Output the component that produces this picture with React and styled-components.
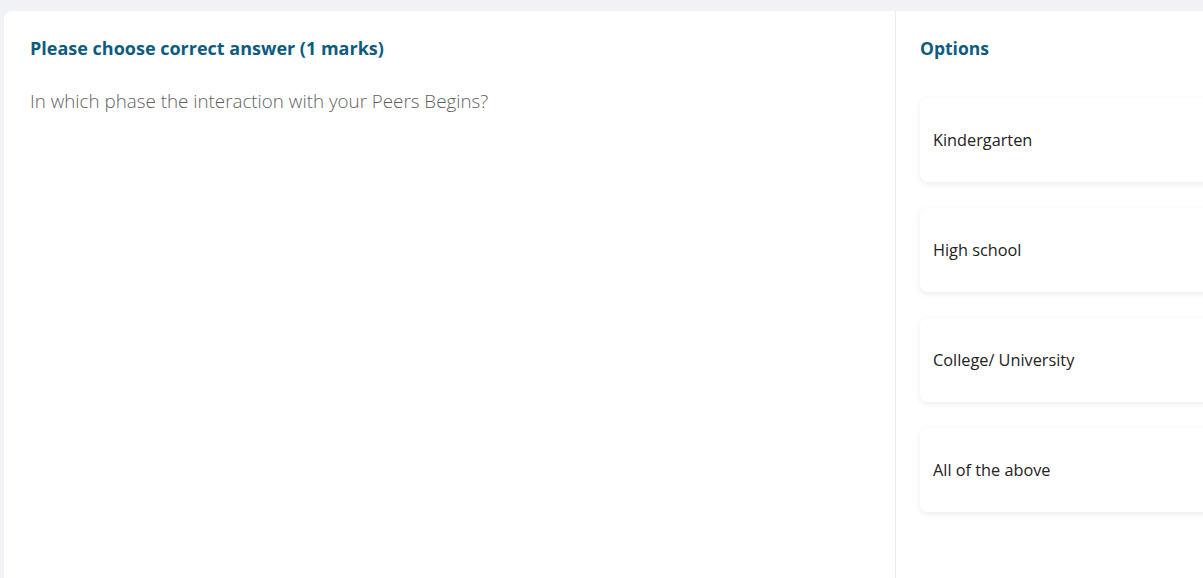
import React from 'react';
import styled, { createGlobalStyle } from 'styled-components';

const GlobalStyle = createGlobalStyle`
    html, body {
        margin: 0;
        padding: 0;
        background: #f0f2f5;
        overflow: hidden;
    }
    body {
        font-family: "Open Sans", "Noto Sans", sans-serif;
    }
`;

const options = ['Kindergarten', 'High school', 'College/ University', 'All of the above'];

const App = () => {
    return (
        <Page>
            <GlobalStyle />
            <Card>
                <QuestionPane>
                    <Heading>Please choose correct answer (1 marks)</Heading>
                    <QuestionText>In which phase the interaction with your Peers Begins?</QuestionText>
                </QuestionPane>
                <OptionsPane>
                    <Heading size={17.5}>Options</Heading>
                    <OptionList>
                        {options.map((option) => (
                            <Option key={option}>{option}</Option>
                        ))}
                    </OptionList>
                </OptionsPane>
            </Card>
        </Page>
    );
};

export default App;

const Page = styled.div`
    width: 1203px;
    height: 578px;
    padding: 11px 0 0 4px;
    box-sizing: border-box;
    overflow: hidden;
`;

const Card = styled.div`
    display: flex;
    width: 1260px;
    height: 600px;
    background: #fff;
    border-radius: 8px;
`;

const QuestionPane = styled.section`
    width: 892px;
    flex-shrink: 0;
    box-sizing: border-box;
    padding: 26px 26px;
    border-right: 1px solid #ececec;
`;

const Heading = styled.h3`
    margin: 0;
    font-size: ${(p) => p.size || 18}px;
    line-height: 22px;
    font-weight: 700;
    color: #0d5c80;
`;

const QuestionText = styled.p`
    margin: 30px 0 0;
    font-size: 18.8px;
    line-height: 24px;
    font-weight: 300;
    color: #5f5f5f;
`;

const OptionsPane = styled.section`
    flex: 1;
    padding: 26px 0 0 24px;
`;

const OptionList = styled.div`
    display: flex;
    flex-direction: column;
    gap: 26px;
    margin-top: 39px;
`;

const Option = styled.div`
    height: 84px;
    display: flex;
    align-items: center;
    padding: 0 13px;
    border-radius: 8px;
    background: #fff;
    box-shadow: 0 2px 6px rgba(0, 0, 0, 0.08);
    font-size: 16.3px;
    color: #222;
`;
